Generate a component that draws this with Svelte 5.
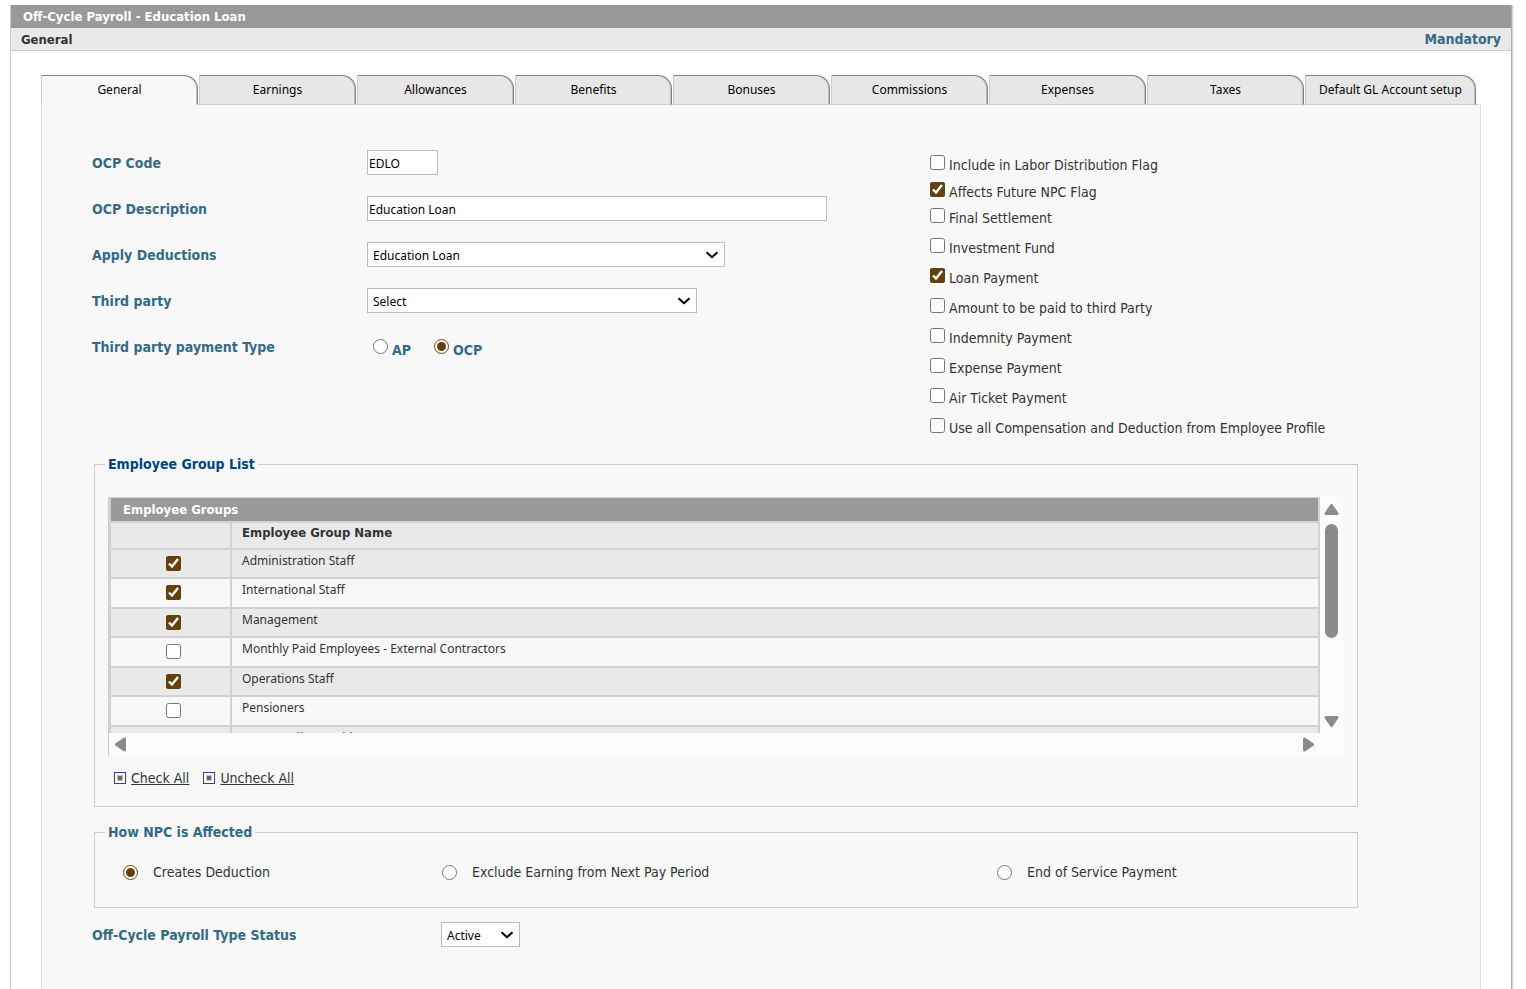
<script>
    const tabs = ['General', 'Earnings', 'Allowances', 'Benefits', 'Bonuses', 'Commissions', 'Expenses', 'Taxes', 'Default GL Account setup'];
    let activeTab = $state('General');

    let flags = $state([
        { label: 'Include in Labor Distribution Flag', checked: false },
        { label: 'Affects Future NPC Flag', checked: true },
        { label: 'Final Settlement', checked: false },
        { label: 'Investment Fund', checked: false },
        { label: 'Loan Payment', checked: true },
        { label: 'Amount to be paid to third Party', checked: false },
        { label: 'Indemnity Payment', checked: false },
        { label: 'Expense Payment', checked: false },
        { label: 'Air Ticket Payment', checked: false },
        { label: 'Use all Compensation and Deduction from Employee Profile', checked: false }
    ]);

    let groups = $state([
        { name: 'Administration Staff', checked: true },
        { name: 'International Staff', checked: true },
        { name: 'Management', checked: true },
        { name: 'Monthly Paid Employees - External Contractors', checked: false },
        { name: 'Operations Staff', checked: true },
        { name: 'Pensioners', checked: false },
        { name: 'Temporarily Monthly', checked: false }
    ]);

    let code = $state('EDLO');
    let description = $state('Education Loan');
    let paymentType = $state('OCP');
    let npcEffect = $state('deduction');

    function setAll(e, value) {
        e.preventDefault();
        groups.forEach((g) => (g.checked = value));
    }
</script>

{#snippet bullet()}
    <svg class="bullet" viewBox="0 0 12 12" aria-hidden="true">
        <rect x="0.5" y="0.5" width="11" height="11" fill="#fff" stroke="#3340a0" />
        <rect x="3" y="3" width="6" height="6" fill="#c4c4c4" />
        <rect x="4" y="4" width="4" height="4" fill="#666" />
    </svg>
{/snippet}

{#snippet chevron()}
    <svg class="chevron" viewBox="0 0 14 8" aria-hidden="true">
        <path d="M1.5 1.2 L7 6.2 L12.5 1.2" fill="none" stroke="#000" stroke-width="2" />
    </svg>
{/snippet}

<div class="frame">
    <h1>Off-Cycle Payroll - Education Loan</h1>
    <div class="subbar">
        <span>General</span>
        <span class="mandatory">Mandatory</span>
    </div>

    <div class="body">
        <div class="tabs" role="tablist">
            {#each tabs as tab}
                <button role="tab" class:active={tab === activeTab} aria-selected={tab === activeTab} onclick={() => (activeTab = tab)}>{tab}</button>
            {/each}
        </div>

        <form class="panel">
            <div class="top">
                <div class="fields">
                    <label class="name" for="code">OCP Code</label>
                    <input id="code" class="text short" type="text" bind:value={code} />

                    <label class="name" for="description">OCP Description</label>
                    <input id="description" class="text long" type="text" bind:value={description} />

                    <label class="name" for="deductions">Apply Deductions</label>
                    <div class="select deductions">
                        <select id="deductions"><option>Education Loan</option></select>
                        {@render chevron()}
                    </div>

                    <label class="name" for="thirdparty">Third party</label>
                    <div class="select thirdparty">
                        <select id="thirdparty"><option>Select</option></select>
                        {@render chevron()}
                    </div>

                    <span class="name" id="paytype">Third party payment Type</span>
                    <div class="radios" role="radiogroup" aria-labelledby="paytype">
                        <label><input type="radio" value="AP" bind:group={paymentType} /><span>AP</span></label>
                        <label><input type="radio" value="OCP" bind:group={paymentType} /><span>OCP</span></label>
                    </div>
                </div>

                <ul class="flags">
                    {#each flags as flag}
                        <li>
                            <label><input type="checkbox" bind:checked={flag.checked} /><span>{flag.label}</span></label>
                        </li>
                    {/each}
                </ul>
            </div>

            <fieldset class="groups">
                <legend>Employee Group List</legend>
                <div class="scroller">
                    <div class="view">
                        <table>
                            <caption>Employee Groups</caption>
                            <thead>
                                <tr><th class="tick"></th><th>Employee Group Name</th></tr>
                            </thead>
                            <tbody>
                                {#each groups as group}
                                    <tr>
                                        <td class="tick"><input type="checkbox" aria-label={group.name} bind:checked={group.checked} /></td>
                                        <td>{group.name}</td>
                                    </tr>
                                {/each}
                            </tbody>
                        </table>
                    </div>
                    <div class="vbar">
                        <svg width="15" height="11" viewBox="0 0 15 11"><path d="M7.5 1.5 L13 9.5 H2 Z" /></svg>
                        <div class="thumb"></div>
                        <svg width="15" height="11" viewBox="0 0 15 11"><path d="M7.5 9.5 L13 1.5 H2 Z" /></svg>
                    </div>
                    <div class="hbar">
                        <svg width="11" height="15" viewBox="0 0 11 15"><path d="M1.5 7.5 L9.5 2 V13 Z" /></svg>
                        <svg width="11" height="15" viewBox="0 0 11 15"><path d="M9.5 7.5 L1.5 2 V13 Z" /></svg>
                    </div>
                </div>
                <div class="links">
                    {@render bullet()}
                    <a href="#check" onclick={(e) => setAll(e, true)}>Check All</a>
                    {@render bullet()}
                    <a href="#uncheck" onclick={(e) => setAll(e, false)}>Uncheck All</a>
                </div>
            </fieldset>

            <fieldset class="npc">
                <legend>How NPC is Affected</legend>
                <div class="choices">
                    <label><input type="radio" value="deduction" bind:group={npcEffect} />Creates Deduction</label>
                    <label><input type="radio" value="exclude" bind:group={npcEffect} />Exclude Earning from Next Pay Period</label>
                    <label><input type="radio" value="eos" bind:group={npcEffect} />End of Service Payment</label>
                </div>
            </fieldset>

            <div class="status">
                <label class="name" for="status">Off-Cycle Payroll Type Status</label>
                <div class="select active-state">
                    <select id="status"><option>Active</option></select>
                    {@render chevron()}
                </div>
            </div>
        </form>
    </div>
</div>

<style>
    :global(body) {
        background: #fff;
    }
    .frame {
        display: flex;
        flex-direction: column;
        box-sizing: border-box;
        min-height: calc(100vh - 5px);
        margin: 5px 14px 0 10px;
        border-left: 1px solid #ccc;
        border-right: 1px solid #b0b0b0;
        box-shadow: 1px 0 0 #d8d8d8, 2px 0 0 #eee;
        font-family: "DejaVu Sans Condensed", "Noto Sans", sans-serif;
        font-size: 14px;
        line-height: 20px;
        color: #333;
    }
    h1 {
        margin: 0;
        padding: 1px 0 0 12px;
        background: #999;
        color: #fff;
        font-size: 13px;
        line-height: 22px;
        font-weight: 700;
    }
    .subbar {
        display: flex;
        align-items: baseline;
        justify-content: space-between;
        height: 22px;
        padding: 0 10px;
        border-bottom: 1px solid #ccc;
        background: #e9e9e9;
        font-size: 13px;
        font-weight: 700;
        line-height: 22px;
    }
    .mandatory {
        color: #336b87;
        font-size: 14px;
    }
    .body {
        display: flex;
        flex-direction: column;
        flex: 1;
        padding: 24px 30px 0;
    }
    .tabs {
        display: flex;
        gap: 1px;
        margin-bottom: -1px;
    }
    .tabs button {
        position: relative;
        box-sizing: border-box;
        min-width: 157px;
        height: 30px;
        padding: 0 13px;
        border: 1px solid #ccc;
        border-top-color: #808080;
        border-right-color: #808080;
        border-radius: 0 14px 0 0;
        box-shadow: inset -1px 0 0 #c0c0c0;
        background: #e7e7e7;
        color: #000;
        font-family: "Noto Sans", sans-serif;
        font-size: 12px;
        line-height: 28px;
        white-space: nowrap;
    }
    .tabs button.active {
        border-bottom-color: #f8f8f8;
        background: #f8f8f8;
    }
    .panel {
        flex: 1;
        padding: 45px 122px 42px 50px;
        border: 1px solid #e0e0e0;
        border-bottom: none;
        background: #f8f8f8;
    }
    .top {
        display: grid;
        grid-template-columns: 66.2% 1fr;
        margin-bottom: 6px;
    }
    .fields {
        display: grid;
        grid-template-columns: 275px 1fr;
        grid-auto-rows: 25px;
        row-gap: 21px;
        align-items: center;
        align-content: start;
    }
    .name {
        color: #336b87;
        font-weight: 700;
    }
    .text,
    select {
        box-sizing: border-box;
        width: 100%;
        height: 25px;
        padding: 2px 1px 0;
        border: 1px solid #bbb;
        border-radius: 0;
        background: #fff;
        color: #000;
        font-family: "Noto Sans", sans-serif;
        font-size: 12px;
    }
    .text.short {
        width: 71px;
    }
    .text.long {
        width: 460px;
    }
    .select {
        display: grid;
        align-items: center;
    }
    .select > :global(*) {
        grid-area: 1 / 1;
    }
    select {
        appearance: none;
        padding: 2px 5px 0;
    }
    .deductions {
        width: 358px;
    }
    .thirdparty {
        width: 330px;
    }
    .active-state {
        width: 79px;
    }
    .chevron {
        width: 14px;
        height: 8px;
        justify-self: end;
        margin-right: 6px;
        pointer-events: none;
    }
    input[type="checkbox"],
    input[type="radio"] {
        flex: none;
        width: 15px;
        height: 15px;
        margin: 0;
        accent-color: #64400f;
    }
    .radios {
        display: flex;
        gap: 23px;
        padding: 6px 0 0 6px;
        color: #336b87;
        font-weight: 700;
    }
    .radios label {
        display: flex;
        gap: 4px;
    }
    .radios span {
        padding-top: 1px;
    }
    .flags {
        display: grid;
        grid-template-rows: 27px 26px;
        grid-auto-rows: 30px;
        margin: 0;
        padding: 5px 0 0;
        list-style: none;
    }
    .flags label {
        display: flex;
        gap: 4px;
        white-space: nowrap;
    }
    fieldset {
        min-width: 0;
        margin: 0 0 0 2px;
        padding: 0 14px 0 13px;
        border: 1px solid #ccc;
    }
    legend {
        margin-left: -3px;
        padding: 0 3px;
        color: #336b87;
        font-weight: 700;
    }
    .groups legend {
        color: #00457f;
    }
    .scroller {
        display: grid;
        grid-template-columns: 1fr 23px;
        grid-template-rows: 236px 23px;
        margin-top: 23px;
        border-left: 1px solid #ccc;
        background: #fcfcfc;
    }
    .view {
        overflow: hidden;
        background: #d0d3d2;
    }
    table {
        width: 100%;
        border-spacing: 2px;
        font-size: 12px;
        line-height: 20px;
    }
    caption {
        margin: 1px 2px 0;
        padding-left: 12px;
        background: #999;
        color: #fff;
        font-size: 13px;
        font-weight: 700;
        line-height: 23px;
        text-align: left;
    }
    th,
    td {
        box-sizing: border-box;
        height: 27px;
        padding: 1px 10px 0;
        background: #e9e9e9;
        text-align: left;
        vertical-align: top;
    }
    th {
        height: 25px;
        padding-top: 0;
        font-size: 13px;
    }
    td {
        font-family: "Noto Sans", sans-serif;
    }
    tbody tr:nth-child(even) td {
        height: 28px;
        background: #f8f8f8;
    }
    .tick {
        width: 119px;
        padding: 6px 0 0 6px;
        line-height: 0;
        text-align: center;
    }
    .vbar {
        display: flex;
        flex-direction: column;
        align-items: center;
        padding: 7px 0 6px;
    }
    .thumb {
        width: 13px;
        height: 114px;
        margin: 9px 0 auto;
        border-radius: 7px;
        background: #8b8b8b;
    }
    .vbar path,
    .hbar path {
        fill: #8b8b8b;
        stroke: #8b8b8b;
        stroke-width: 3;
        stroke-linejoin: round;
    }
    .hbar {
        display: flex;
        align-items: center;
        justify-content: space-between;
        padding: 0 6px;
    }
    .links {
        display: flex;
        align-items: center;
        gap: 5px;
        padding: 12px 0 18px 6px;
    }
    .links a {
        margin-right: 9px;
        color: #333;
    }
    .bullet {
        width: 12px;
        height: 12px;
    }
    .npc {
        margin-top: 15px;
    }
    .choices {
        display: grid;
        grid-template-columns: 319px 555px 1fr;
        padding: 20px 0 25px 15px;
    }
    .choices label {
        display: flex;
        align-items: center;
        gap: 15px;
    }
    .status {
        display: grid;
        grid-template-columns: 349px 1fr;
        align-items: center;
        margin-top: 14px;
    }
</style>
